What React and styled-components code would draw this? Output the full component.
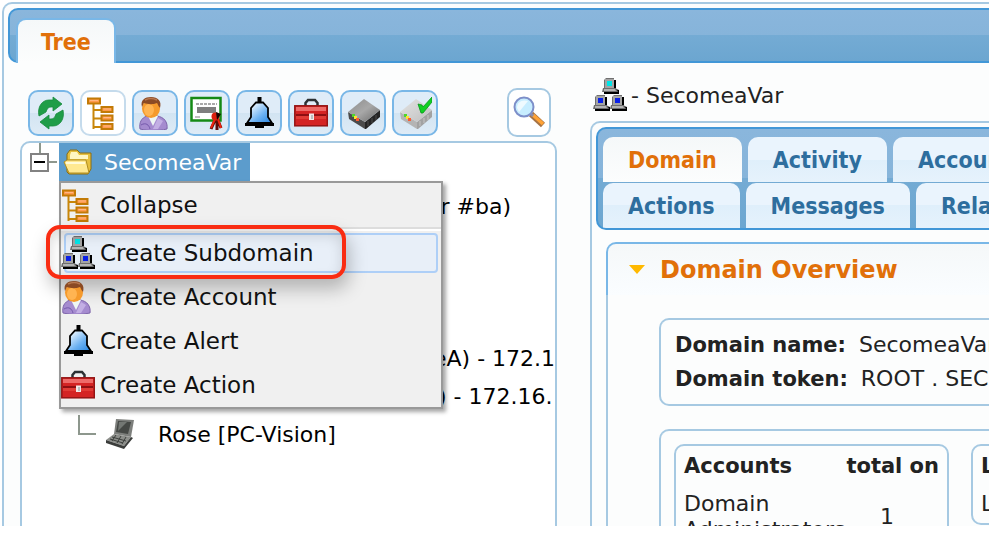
import React from "react";
import styled, { createGlobalStyle, css } from "styled-components";

function App() {
  return (
    <>
      <GlobalStyle />
      <Page>
        <Frame>
          <MainBar role="tablist">
            <MainTab type="button" role="tab" aria-selected="true">
              Tree
            </MainTab>
          </MainBar>
          <Columns>
            <TreeColumn />
            <DetailColumn />
          </Columns>
        </Frame>
      </Page>
    </>
  );
}

export default App;

function TreeColumn() {
  return (
    <TreeSide>
      <Toolbar>
        <ToolGroup>
          <ToolButton aria-label="Refresh">
            <RefreshIcon />
          </ToolButton>
          <ToolButton aria-label="Toggle tree" $active>
            <TreeIcon />
          </ToolButton>
          <ToolButton aria-label="Accounts">
            <UserIcon />
          </ToolButton>
          <ToolButton aria-label="Certificates">
            <CertificateIcon />
          </ToolButton>
          <ToolButton aria-label="Alerts">
            <BellIcon />
          </ToolButton>
          <ToolButton aria-label="Actions">
            <ToolboxIcon />
          </ToolButton>
          <ToolButton aria-label="Appliances">
            <ServerIcon />
          </ToolButton>
          <ToolButton aria-label="Enabled appliances">
            <ServerIcon checked />
          </ToolButton>
        </ToolGroup>
        <SearchButton aria-label="Search">
          <SearchIcon />
        </SearchButton>
      </Toolbar>
      <TreePanel>
        <RootRow>
          <Expander type="button" aria-label="Collapse SecomeaVar" />
          <RootNode>
            <FolderIcon />
            SecomeaVar
            <ContextMenu />
          </RootNode>
        </RootRow>
        <Children>
          <TreeRow $indent={405}>er #ba)</TreeRow>
          <TreeRow />
          <TreeRow />
          <TreeRow />
          <TreeRow $indent={411}>eA) - 172.16</TreeRow>
          <TreeRow $indent={416}>) - 172.16.</TreeRow>
          <TreeRow $indent={56}>
            <Branch />
            <LaptopIcon />
            <LeafLabel>Rose [PC-Vision]</LeafLabel>
          </TreeRow>
        </Children>
      </TreePanel>
    </TreeSide>
  );
}

function ContextMenu() {
  return (
    <Menu role="menu">
      <MenuItem role="menuitem">
        <TreeIcon />
        Collapse
      </MenuItem>
      <Separator />
      <MenuItem role="menuitem" $hover>
        <NetworkIcon />
        Create Subdomain
        <Callout />
      </MenuItem>
      <MenuItem role="menuitem">
        <UserIcon />
        Create Account
      </MenuItem>
      <MenuItem role="menuitem">
        <BellIcon />
        Create Alert
      </MenuItem>
      <MenuItem role="menuitem">
        <ToolboxIcon />
        Create Action
      </MenuItem>
    </Menu>
  );
}

function DetailColumn() {
  return (
    <DetailSide>
      <Title>
        <NetworkIcon />
        <span>- SecomeaVar</span>
      </Title>
      <DetailFrame>
        <DetailBar role="tablist">
          <TabRow>
            <Tab role="tab" aria-selected="true" $active>
              Domain
            </Tab>
            <Tab role="tab">Activity</Tab>
            <Tab role="tab">Accounts</Tab>
          </TabRow>
          <TabRow>
            <Tab role="tab">Actions</Tab>
            <Tab role="tab">Messages</Tab>
            <Tab role="tab">Relations</Tab>
          </TabRow>
        </DetailBar>
        <Section>
          <SectionHeader>
            <svg width="16" height="9" viewBox="0 0 16 9">
              <path d="M0 0H16L8 9Z" fill="#ffb900" />
            </svg>
            Domain Overview
          </SectionHeader>
          <SectionBody>
            <InfoBox>
              <p>
                <b>Domain name:</b> SecomeaVar
              </p>
              <p>
                <b>Domain token:</b> ROOT . SECOMEAVAR
              </p>
            </InfoBox>
            <StatsBox>
              <Card>
                <StatTable>
                  <thead>
                    <tr>
                      <th>Accounts</th>
                      <th>total on</th>
                    </tr>
                  </thead>
                  <tbody>
                    <tr>
                      <td>Domain Administrators</td>
                      <td>1</td>
                    </tr>
                  </tbody>
                </StatTable>
              </Card>
              <Card $wide>
                <b>L</b>
                <p>L</p>
              </Card>
            </StatsBox>
          </SectionBody>
        </Section>
      </DetailFrame>
    </DetailSide>
  );
}

/* ---------- icons ---------- */

function RefreshIcon() {
  const arrow =
    "M19 1L28 8L19 15V11H17C14 11 13 13 12 16L5 20C3 11 8 4 15 4H19Z";
  return (
    <Icon viewBox="0 0 34 34">
      <g fill="#1f9d48" stroke="#178a3c" strokeWidth="0.8">
        <path d={arrow} />
        <path d={arrow} transform="rotate(180 17 17)" />
      </g>
    </Icon>
  );
}

function TreeIcon() {
  return (
    <Icon viewBox="0 0 34 34">
      <path
        d="M7.5 8V33M7.5 14H16M7.5 22.5H16M7.5 31H16"
        stroke="#c8860a"
        strokeWidth="2"
        fill="none"
      />
      <g fill="#ff9a4d" stroke="#c27a06" strokeWidth="2">
        <rect x="2" y="2.5" width="12" height="5" />
        <rect x="15.5" y="11" width="11" height="5" />
        <rect x="15.5" y="19.5" width="11" height="5" />
        <rect x="15.5" y="28" width="11" height="5" />
      </g>
      <path
        d="M4 4.5H12M17.5 13H25M17.5 21.5H25M17.5 30H25"
        stroke="#ffb784"
        strokeWidth="1.2"
      />
    </Icon>
  );
}

function UserIcon() {
  return (
    <Icon viewBox="0 0 34 34">
      <path
        d="M2 33C1 27 3 22 9 20H19C26 21 30 26 29 33C20 35 10 35 2 33Z"
        fill="#a58bcf"
        stroke="#7d64aa"
      />
      <path d="M10 20L15 30L20 20Z" fill="#eef6f3" />
      <path d="M15 33L20 22L25 25L20 33Z" fill="#c3afe4" />
      <path d="M3 29C8 26 11 29 12 33" stroke="#7458ab" fill="none" />
      <ellipse cx="13" cy="12.5" rx="9" ry="9.5" fill="#f59a2c" />
      <ellipse cx="11" cy="14" rx="5" ry="6" fill="#ffb452" />
      <path
        d="M4 11C2 4 7 1 13 1C20 1 24 5 22 12C20 10 20 8 19 7C14 9 9 8 6 7C5 8 5 9 4 11Z"
        fill="#8b4a24"
      />
      <path
        d="M7 4C11 2 15 2 19 4"
        stroke="#b87850"
        strokeWidth="1.5"
        fill="none"
      />
    </Icon>
  );
}

function CertificateIcon() {
  return (
    <Icon viewBox="0 0 34 34">
      <rect
        x="1.5"
        y="2"
        width="29"
        height="22.5"
        fill="#fff"
        stroke="#158a15"
        strokeWidth="2.5"
      />
      <path
        d="M6 8H27"
        stroke="#8f8f8f"
        strokeWidth="1.5"
        strokeDasharray="3 1"
      />
      <rect x="7" y="11" width="19" height="6" fill="#7f7f7f" />
      <path d="M5 21H10" stroke="#aaa" strokeWidth="1.5" />
      <path d="M26 22L21 33M27 23V34M27 22L31 32" stroke="#5d0c08" strokeWidth="3" />
      <path d="M25 23L21 32M28 23L31 32" stroke="#f0250f" strokeWidth="2" />
      <circle cx="25.5" cy="20.5" r="4" fill="#dc200d" />
      <path d="M26 16L31 18L27 24Z" fill="#150402" />
    </Icon>
  );
}

function BellIcon() {
  const id = React.useId();
  return (
    <Icon viewBox="0 0 34 34">
      <defs>
        <linearGradient id={id} x1="0" y1="0" x2="1" y2="1">
          <stop offset="0.2" stopColor="#dff0ff" />
          <stop offset="0.6" stopColor="#6db2f2" />
          <stop offset="1" stopColor="#2483e0" />
        </linearGradient>
      </defs>
      <rect x="15.5" y="1" width="4" height="6" fill="#000" />
      <path
        d="M14 6.5H21L26 12V21L30 27H5L9 21V12Z"
        fill={`url(#${id})`}
        stroke="#000"
        strokeWidth="1.8"
      />
      <path d="M3 27H32V30H22V32H13V30H3Z" fill="#000" />
    </Icon>
  );
}

function ToolboxIcon() {
  return (
    <Icon viewBox="0 0 34 34">
      <path
        d="M11.5 11V7L14 4H21L23.5 7V11"
        fill="none"
        stroke="#2c3134"
        strokeWidth="2.5"
      />
      <rect
        x="0.8"
        y="9.8"
        width="32.5"
        height="20"
        fill="#d42424"
        stroke="#941414"
        strokeWidth="1.5"
      />
      <rect x="2" y="11" width="30" height="4" fill="#ee6b69" />
      <rect x="2" y="18" width="30" height="2" fill="#8e0f12" />
      <rect x="2" y="20" width="30" height="3" fill="#e13c36" />
      <rect x="15" y="17.5" width="5" height="6.5" fill="#f2e8e8" />
      <rect x="17" y="19" width="2" height="4" fill="#b9bfc0" />
    </Icon>
  );
}

function ServerIcon({ checked }) {
  const id = React.useId();
  return (
    <Icon viewBox="0 0 34 34">
      <defs>
        <linearGradient id={id} x1="0" y1="0" x2="1" y2="1">
          <stop offset="0" stopColor={checked ? "#e2e2e2" : "#8c8c8c"} />
          <stop offset="0.5" stopColor={checked ? "#d2d2d2" : "#a8a8a8"} />
          <stop offset="1" stopColor={checked ? "#bdbdbd" : "#686868"} />
        </linearGradient>
      </defs>
      <path d="M2 16L19 26V33L3 23Z" fill={checked ? "#b4b4b4" : "#4b4b4b"} />
      <path d="M19 26L34 14V21L20 33H19Z" fill={checked ? "#a2a2a2" : "#252525"} />
      <path d="M2 16L18 3L34 14L19 26Z" fill={`url(#${id})`} />
      <path
        d="M22 30V25M26 27V22M30 24V19"
        stroke={checked ? "#cecece" : "#555"}
        strokeWidth="0.8"
      />
      <rect x="6" y="18" width="3" height="3" fill="#4fd62b" />
      <rect x="8" y="20" width="3" height="3" fill="#ffe52e" />
      <rect x="10" y="22" width="3" height="3" fill="#ff5a30" />
      {checked && (
        <path
          d="M20 8L24 9L25 11L34 1V6L25 17H23Z"
          fill="#10d023"
          stroke="#07971a"
          strokeWidth="0.8"
        />
      )}
    </Icon>
  );
}

function SearchIcon() {
  return (
    <Icon viewBox="0 0 34 34">
      <path d="M19 18L31 29" stroke="#a67345" strokeWidth="6" />
      <path d="M21 19L31 28" stroke="#ffa336" strokeWidth="3.5" />
      <path d="M17 16L21 20" stroke="#8b8da9" strokeWidth="3" />
      <circle
        cx="12"
        cy="11"
        r="9.5"
        fill="#c7edff"
        stroke="#7d8fc9"
        strokeWidth="2"
      />
      <path d="M5 12C5 6 10 3 16 5L7 16Z" fill="#effaff" />
    </Icon>
  );
}

function FolderIcon() {
  return (
    <Icon viewBox="0 0 34 34">
      <path
        d="M5 27V9L8 5H15L18 8H29V24L26 29H7Z"
        fill="#e5bf3e"
        stroke="#8a6d13"
      />
      <path d="M8 10L9 7H15L17 10H26V14H8Z" fill="#fff6c2" />
      <path d="M2 17L5 15H24L27 28H7Z" fill="#ffe991" stroke="#b08d20" />
      <path d="M4 18H23" stroke="#fffbd9" strokeWidth="2" />
    </Icon>
  );
}

function Computer({ x, y, screen }) {
  return (
    <g transform={`translate(${x} ${y})`}>
      <path d="M5 2H14V11L17 12V16H2V14H13Z" fill="#000" />
      <path d="M2 2L4 0H12V11H2Z" fill="#707070" />
      <rect x="3" y="1" width="9" height="9" fill="#a4a4a4" />
      <rect x="5" y="3" width="5" height="5" fill={screen} />
      <path d="M1 10H14L16 14H0Z" fill="#6e6e6e" />
      <path d="M2 11H13L14 13H2Z" fill="#b4b4b4" />
    </g>
  );
}

function NetworkIcon() {
  return (
    <Icon viewBox="0 0 34 34">
      <Computer x={9} y={0} screen="#00e5e8" />
      <Computer x={0} y={17} screen="#0a20e8" />
      <Computer x={17} y={17} screen="#0a20e8" />
    </Icon>
  );
}

function LaptopIcon() {
  return (
    <Icon viewBox="0 0 34 34">
      <path d="M12 2L30 3L27 20L10 17Z" fill="#7d7f7c" />
      <path d="M14 4L27 5L24 17L12 15Z" fill="#454845" />
      <path d="M15 5L23 5L14 14Z" fill="#737773" />
      <path d="M10 17L27 20L20 29L2 23Z" fill="#8c8e8a" />
      <path d="M2 23L20 29L27 20L29 21L20 32L2 26Z" fill="#3b3d3b" />
      <path
        d="M8 20L22 24M6 22L19 26M12 18L8 24M17 19L13 26M22 20L18 27"
        stroke="#3d403d"
        strokeWidth="1"
      />
    </Icon>
  );
}

/* ---------- styles ---------- */

const GlobalStyle = createGlobalStyle`
  * {
    box-sizing: border-box;
  }
  body {
    margin: 0;
    background: #fff;
    color: #222;
    font-family: "DejaVu Sans", Verdana, sans-serif;
    font-size: 22px;
  }
  p, h1, h2, ul {
    margin: 0;
    padding: 0;
  }
  button {
    font: inherit;
    color: inherit;
    cursor: pointer;
  }
`;

const Icon = styled.svg.attrs({ "aria-hidden": true })`
  width: 34px;
  height: 34px;
  flex-shrink: 0;
`;

const Page = styled.div`
  height: calc(100vh - 8px);
  margin-right: 5px;
  padding: 2px 0 0 2px;
  overflow: hidden;
`;
const Frame = styled.main`
  height: 150vh;
  padding: 4px 0 0 4px;
  border: 2px solid #a6c9e2;
  border-width: 2px 0 0 2px;
  border-radius: 10px 0 0 0;
  background: #fcfdfd;
`;

const blueBar = css`
  border: 2px solid #4297d7;
  border-right: 0;
  border-radius: 10px 0 0 10px;
  background: linear-gradient(#8ab6dc 0%, #86b4da 50%, #74abd4 50%, #6ca6d0 100%);
`;
const tabFont = css`
  font-family: "DejaVu Sans Condensed", "DejaVu Sans", sans-serif;
  font-size: 23px;
  font-weight: bold;
`;
const MainBar = styled.nav`
  ${blueBar}
  display: flex;
  height: 55px;
  padding: 8px 0 0 6px;
`;
const MainTab = styled.button`
  ${tabFont}
  height: 45px;
  padding: 0 23px;
  border: 2px solid #79b7e7;
  border-bottom: 0;
  border-radius: 10px 10px 0 0;
  background: linear-gradient(#f5f8f9, #fcfdfd);
  color: #e17009;
`;
const Columns = styled.div`
  display: grid;
  grid-template-columns: minmax(0, 582fr) minmax(0, 399fr);
`;

const TreeSide = styled.section`
  padding: 25px 33px 0 12px;
`;
const Toolbar = styled.div`
  display: flex;
  justify-content: space-between;
  align-items: center;
  padding: 0 6px 0 8px;
  margin-bottom: 4px;
`;
const ToolGroup = styled.div`
  display: flex;
  gap: 6px;
`;
const ToolButton = styled.button`
  width: 46px;
  height: 46px;
  padding: 0;
  display: flex;
  justify-content: center;
  align-items: center;
  border: 2px solid ${(p) => (p.$active ? "#c5dbec" : "#79b7e7")};
  border-radius: 10px;
  background: ${(p) =>
    p.$active ? "#fff" : "linear-gradient(#dfecf8 50%, #d2e4f2 50%, #deebf6)"};
`;
const SearchButton = styled(ToolButton)`
  width: 44px;
  height: 49px;
  border-color: #a6c9e2;
  background: #fff;
`;
const TreePanel = styled.div`
  height: 150vh;
  overflow: hidden;
  border: 2px solid #a6c9e2;
  border-radius: 10px;
  background: #fff;
  color: #000;
`;
const RootRow = styled.div`
  display: flex;
  align-items: center;
  height: 38px;
  padding-left: 8px;
  background: linear-gradient(#8d978d, #8d978d) 17px 0 / 2px 10px no-repeat,
    linear-gradient(#8d978d, #8d978d) 27px 18px / 8px 2px no-repeat;
`;
const Expander = styled.button`
  width: 19px;
  height: 19px;
  margin-right: 10px;
  padding: 0;
  border: 2px solid #828282;
  background: linear-gradient(#000, #000) center / 11px 2px no-repeat #fff;
`;
const RootNode = styled.div`
  position: relative;
  display: flex;
  align-items: center;
  gap: 8px;
  height: 100%;
  padding: 0 9px 0 3px;
  background: #5c9ccc;
  color: #fff;
`;
const Children = styled.ul`
  padding-top: 6px;
  list-style: none;
`;
const TreeRow = styled.li`
  display: flex;
  align-items: center;
  height: 38px;
  padding-left: ${(p) => p.$indent || 0}px;
  white-space: nowrap;
`;
const Branch = styled.span`
  width: 18px;
  height: 20px;
  margin: 0 8px 18px 0;
  border: 2px solid #8d978d;
  border-width: 0 0 2px 2px;
`;
const LeafLabel = styled.span`
  margin-left: 20px;
`;

const Menu = styled.div`
  position: absolute;
  z-index: 2;
  top: 100%;
  left: 0;
  width: 384px;
  border: 2px solid #999;
  background: #f0f0f0;
  box-shadow: 3px 3px 4px rgba(0, 0, 0, 0.35);
  color: #111;
`;
const MenuItem = styled.button`
  position: relative;
  display: flex;
  align-items: center;
  gap: 5px;
  width: 100%;
  height: 44px;
  padding: 0;
  border: 0;
  font-size: 23px;
  background: none;
  ${(p) =>
    p.$hover &&
    css`
      &::before {
        content: "";
        position: absolute;
        z-index: -1;
        inset: 2px 3px;
        border: 2px solid #aecff7;
        border-radius: 4px;
        background: #e8eff8;
      }
    `}
`;
const Separator = styled.div`
  height: 4px;
  border-top: 2px solid #ddd;
  background: #fff;
`;
const Callout = styled.span`
  position: absolute;
  top: -6px;
  left: -15px;
  width: 300px;
  height: 54px;
  border: 4px solid #f92c12;
  border-radius: 14px;
  box-shadow: 3px 10px 18px rgba(0, 0, 0, 0.25),
    inset 0 6px 14px rgba(0, 0, 0, 0.14);
  pointer-events: none;
`;

const DetailSide = styled.section`
  min-width: 0;
`;
const Title = styled.h1`
  display: flex;
  align-items: center;
  gap: 4px;
  padding: 15px 0 9px 3px;
  font-size: 22px;
  font-weight: normal;
`;
const DetailFrame = styled.div`
  height: 150vh;
  padding: 4px 0 0 4px;
  border: 2px solid #a6c9e2;
  border-width: 2px 0 0 2px;
  border-radius: 10px 0 0 0;
`;
const DetailBar = styled.nav`
  ${blueBar}
  overflow: hidden;
  padding: 8px 0 0 5px;
`;
const TabRow = styled.div`
  display: flex;
  gap: 6px;
  & + & {
    margin-top: 1px;
  }
`;
const Tab = styled.button`
  ${tabFont}
  height: 45px;
  padding: 0 25px;
  border: 0;
  border-radius: 10px 10px 0 0;
  background: ${(p) =>
    p.$active
      ? "linear-gradient(#f5f8f9, #fcfdfd)"
      : "linear-gradient(#eaf4fd 50%, #dfeffb 50%, #e6f2fc)"};
  color: ${(p) => (p.$active ? "#e17009" : "#2e6e9e")};
`;

const Section = styled.section`
  margin: 12px 0 0 10px;
`;
const SectionHeader = styled.h2`
  display: flex;
  align-items: center;
  gap: 15px;
  height: 53px;
  padding-left: 21px;
  border: 2px solid #79b7e7;
  border-width: 2px 0 0 2px;
  border-radius: 10px 0 0 0;
  background: linear-gradient(#f5f8f9, #fafdff);
  color: #e17009;
  font-size: 24px;
  white-space: nowrap;
`;
const SectionBody = styled.div`
  height: 150vh;
  padding: 23px 0 0 51px;
  border-left: 2px solid #a6c9e2;
  b,
  th {
    font-size: 21px;
  }
`;
const InfoBox = styled.div`
  padding: 8px 0 8px 14px;
  border: 2px solid #a6c9e2;
  border-right: 0;
  border-radius: 10px 0 0 10px;
  line-height: 34px;
  white-space: nowrap;
  overflow: hidden;
  b {
    margin-right: 6px;
  }
`;
const StatsBox = styled.div`
  display: flex;
  align-items: flex-start;
  gap: 22px;
  height: 150vh;
  margin-top: 23px;
  padding: 13px 0 0 13px;
  border: 2px solid #a6c9e2;
  border-width: 2px 0 0 2px;
  border-radius: 10px 0 0 0;
`;
const Card = styled.div`
  flex: none;
  width: ${(p) => (p.$wide ? "360px" : "275px")};
  padding: 7px 8px 6px;
  border: 2px solid #a6c9e2;
  border-radius: 10px;
  line-height: 26px;
  p {
    margin-top: 12px;
  }
`;
const StatTable = styled.table`
  width: 100%;
  table-layout: fixed;
  border-collapse: collapse;
  line-height: 26px;
  th,
  td {
    padding: 0;
    text-align: left;
  }
  th:first-child {
    width: 160px;
  }
  th:last-child {
    text-align: right;
    white-space: nowrap;
  }
  td {
    padding-top: 12px;
    vertical-align: middle;
  }
  td:last-child {
    padding-left: 36px;
  }
`;
